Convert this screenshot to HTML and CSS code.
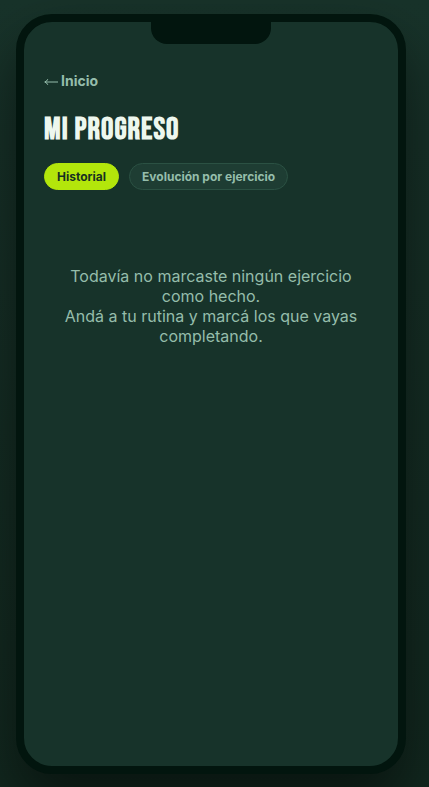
FILE: index.html
```html
<!DOCTYPE html>
<html lang="es">
<head>
<meta charset="UTF-8" />
<meta name="viewport" content="width=device-width, initial-scale=1" />
<title>Mi progreso</title>
<link rel="stylesheet" href="styles.css">
</head>
<body>

<div class="phone">
  <div class="notch"></div>
  <main class="screen">
    <a class="back" href="#">
      <svg class="arrow" viewBox="0 0 14 10" aria-hidden="true">
        <path d="M0.8 6H14M3.8 3.2Q2.8 5.4 0.8 6Q2.8 6.6 3.8 8.8" />
      </svg>
      Inicio
    </a>
    <h1>MI PROGRESO</h1>
    <div class="tabs">
      <button class="tab active" type="button">Historial</button>
      <button class="tab" type="button">Evolución por ejercicio</button>
    </div>
    <p class="empty">Todavía no marcaste ningún ejercicio como hecho.<br />Andá a tu rutina y marcá los que vayas completando.</p>
  </main>
</div>

</body>
</html>
```

FILE: styles.css
```css
* {
  box-sizing: border-box;
}
body {
  margin: 0;
  min-height: 100vh;
  padding: 14px 23px 13px 16px;
  display: flex;
  justify-content: center;
  background: linear-gradient(#18332a, #12281f);
  font-family: Inter, sans-serif;
  color: #95bdab;
  overflow: hidden;
}
.phone {
  position: relative;
  width: 100%;
  max-width: 390px;
  min-height: 760px;
  border: 8px solid #02150e;
  border-radius: 36px;
  background: #17332a;
  box-shadow: 0 30px 60px rgba(0, 0, 0, 0.5);
}
.notch {
  position: absolute;
  top: 0;
  left: 50%;
  width: 120px;
  height: 22px;
  margin-left: -60px;
  background: #02150e;
  border-radius: 0 0 16px 16px;
}
.screen {
  padding: 50px 20px 20px;
}
.back {
  display: flex;
  align-items: center;
  gap: 3px;
  font-size: 14px;
  font-weight: 700;
  line-height: 18px;
  color: #95bdab;
  text-decoration: none;
}
.arrow {
  width: 14px;
  height: 10px;
  fill: none;
  stroke: currentColor;
  stroke-width: 1;
}
h1 {
  margin: 21px 0 15px;
  font-family: "Bebas Neue", "Liberation Sans Narrow", sans-serif;
  font-size: 31px;
  font-weight: 700;
  line-height: 37px;
  letter-spacing: 1px;
  color: #edf7ee;
  white-space: nowrap;
}
.tabs {
  display: flex;
  gap: 10px;
}
.tab {
  height: 27px;
  padding: 0 12px;
  border: 1px solid #2b5143;
  border-radius: 14px;
  background: #1e3d33;
  color: #95bdab;
  font-family: inherit;
  font-size: 12px;
  font-weight: 700;
  white-space: nowrap;
}
.tab.active {
  background: #b3e60b;
  border-color: #b3e60b;
  color: #173022;
}
.empty {
  margin: 76px 0 0;
  padding: 0 20px;
  font-size: 16px;
  line-height: 20px;
  text-align: center;
}
```
